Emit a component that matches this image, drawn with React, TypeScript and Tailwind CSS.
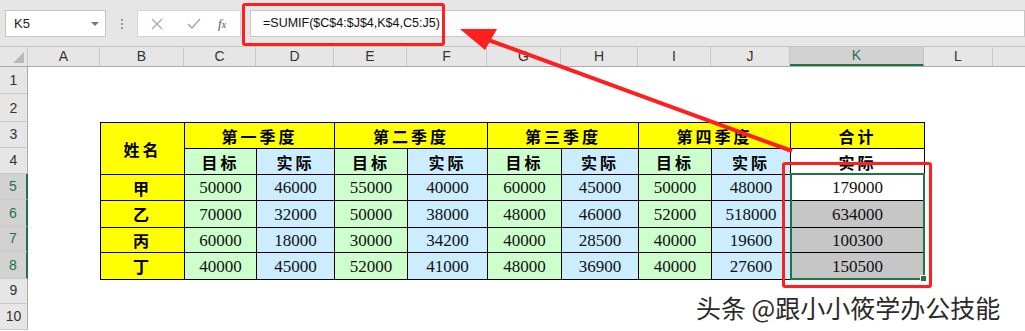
import React from "react";

const cols = [
  { name: "A", w: 72 },
  { name: "B", w: 84 },
  { name: "C", w: 72 },
  { name: "D", w: 78 },
  { name: "E", w: 73 },
  { name: "F", w: 80 },
  { name: "G", w: 74 },
  { name: "H", w: 77 },
  { name: "I", w: 73 },
  { name: "J", w: 79 },
  { name: "K", w: 134 },
  { name: "L", w: 69 },
  { name: "", w: 60 },
];

const rowHeights = [27, 28, 26, 26, 26, 27, 25, 27, 25, 26];

const data = [
  { name: "甲", nums: [50000, 46000, 55000, 40000, 60000, 45000, 50000, 48000], total: 179000 },
  { name: "乙", nums: [70000, 32000, 50000, 38000, 48000, 46000, 52000, 518000], total: 634000 },
  { name: "丙", nums: [60000, 18000, 30000, 34200, 40000, 28500, 40000, 19600], total: 100300 },
  { name: "丁", nums: [40000, 45000, 52000, 41000, 48000, 36900, 40000, 27600], total: 150500 },
];

const cjk = "font-['Noto_Sans_CJK_SC',sans-serif] font-bold text-[16px] tracking-[3px]";
const num = "font-['Liberation_Serif',serif] text-[17px] text-[#111]";
const cell = "border border-black text-center p-0 leading-none";

const App = () => {
  return (
    <div className="relative w-[1025px] h-[331px] overflow-hidden bg-white font-['Liberation_Sans',sans-serif]">
      {/* formula bar */}
      <div className="h-[47px] bg-[#e6e6e6] flex items-start pt-[10px] border-b border-[#c6c6c6]">
        <div className="ml-[5px] w-[101px] h-[27px] bg-white border border-[#c6c6c6] flex items-center justify-between pl-[8px] pr-[6px]">
          <span className="text-[13px] text-[#222]">K5</span>
          <span className="w-0 h-0 border-l-[4px] border-r-[4px] border-t-[4px] border-l-transparent border-r-transparent border-t-[#777]" />
        </div>
        <div className="w-[31px] h-[27px] flex flex-col items-center justify-center gap-[2px]">
          <span className="w-[2px] h-[2px] bg-[#999]" />
          <span className="w-[2px] h-[2px] bg-[#999]" />
          <span className="w-[2px] h-[2px] bg-[#999]" />
        </div>
        <div className="w-[104px] h-[27px] bg-white border border-[#d4d4d4] flex items-center">
          <svg className="ml-[13px]" width="12" height="12" viewBox="0 0 12 12">
            <path d="M1 1 L11 11 M11 1 L1 11" stroke="#a8a8a8" strokeWidth="1.3" />
          </svg>
          <svg className="ml-[24px]" width="14" height="12" viewBox="0 0 14 12">
            <path d="M1 6 L5 10 L13 1" stroke="#a8a8a8" strokeWidth="1.5" fill="none" />
          </svg>
          <span className="ml-[17px] font-['Liberation_Serif',serif] italic text-[13px] text-[#555]">
            f<span className="text-[10px]">x</span>
          </span>
        </div>
        <div className="ml-[9px] flex-1 h-[27px] bg-[#fdfdfd] border border-[#c6c6c6] flex items-center pl-[12px]">
          <span className="text-[12.5px] text-[#111]">=SUMIF($C$4:$J$4,K$4,C5:J5)</span>
        </div>
      </div>

      {/* column headers */}
      <div className="flex h-[20px] bg-[#e6e6e6] border-b border-[#ababab]">
        <div className="w-[28px] shrink-0 border-r border-[#c8c8c8] relative">
          <svg className="absolute right-[3px] bottom-[3px]" width="11" height="11" viewBox="0 0 11 11">
            <path d="M11 0 L11 11 L0 11 Z" fill="#b8b8b8" />
          </svg>
        </div>
        {cols.map((c, i) => (
          <div
            key={i}
            className={`shrink-0 flex items-center justify-center text-[14px] text-[#333] border-r border-[#c8c8c8] ${
              c.name === "K" ? "bg-[#d2d2d2] border-b-2 border-b-[#217346] text-[#217346]" : ""
            }`}
            style={{ width: c.w }}
          >
            {c.name}
          </div>
        ))}
      </div>

      {/* sheet body */}
      <div className="flex">
        <div className="w-[28px] shrink-0 flex flex-col">
          {rowHeights.map((h, i) => {
            const sel = i >= 4 && i <= 7;
            return (
              <div
                key={i}
                className={`flex items-end justify-center pb-[2px] text-[14px] border-b border-[#c8c8c8] ${
                  sel
                    ? "bg-[#d2d2d2] border-r-2 border-r-[#217346] text-[#217346]"
                    : "bg-[#e6e6e6] border-r border-r-[#ababab] text-[#333]"
                }`}
                style={{ height: h }}
              >
                {i + 1}
              </div>
            );
          })}
        </div>

        <div className="flex-1 pt-[55px] pl-[72px]">
          <table className="table-fixed border-collapse">
            <colgroup>
              {cols.slice(1, 11).map((c) => (
                <col key={c.name} style={{ width: c.w }} />
              ))}
            </colgroup>
            <tbody>
              <tr className="h-[26px]">
                <td rowSpan={2} className={`${cell} bg-[#ffff00] ${cjk}`}>姓名</td>
                {["第一季度", "第二季度", "第三季度", "第四季度"].map((q) => (
                  <td key={q} colSpan={2} className={`${cell} bg-[#ffff00] ${cjk}`}>
                    {q}
                  </td>
                ))}
                <td className={`${cell} bg-[#ffff00] ${cjk}`}>合计</td>
              </tr>
              <tr className="h-[26px]">
                {[0, 1, 2, 3].map((q) => (
                  <React.Fragment key={q}>
                    <td className={`${cell} bg-[#ccffcc] ${cjk}`}>目标</td>
                    <td className={`${cell} bg-[#ccecff] ${cjk}`}>实际</td>
                  </React.Fragment>
                ))}
                <td className={`${cell} bg-white ${cjk}`}>实际</td>
              </tr>
              {data.map((r, ri) => (
                <tr key={r.name} className={ri === 1 ? "h-[27px]" : ri === 2 ? "h-[25px]" : ri === 3 ? "h-[27px]" : "h-[26px]"}>
                  <td className={`${cell} bg-[#ffff00] ${cjk}`}>{r.name}</td>
                  {r.nums.map((n, ni) => (
                    <td key={ni} className={`${cell} ${num} ${ni % 2 === 0 ? "bg-[#ccffcc]" : "bg-[#ccecff]"}`}>
                      {n}
                    </td>
                  ))}
                  <td className={`${cell} ${num} ${ri === 0 ? "bg-white" : "bg-[#c6c6c6]"}`}>{r.total}</td>
                </tr>
              ))}
            </tbody>
          </table>
        </div>
      </div>

      {/* selection K5:K8 */}
      <div className="absolute left-[790px] top-[173px] w-[135px] h-[107px] border-2 border-[#217346] pointer-events-none" />
      <div className="absolute left-[920px] top-[275px] w-[7px] h-[7px] bg-[#217346] border border-white" />

      {/* red annotations */}
      <div className="absolute left-[242px] top-[3px] w-[203px] h-[43px] border-[3px] border-[#ff1f1f] rounded-[3px]" />
      <div className="absolute left-[782px] top-[162px] w-[150px] h-[126px] border-[3px] border-[#ff1f1f] rounded-[3px]" />
      <svg className="absolute left-0 top-0 pointer-events-none" width="1025" height="331" viewBox="0 0 1025 331">
        <line x1="792" y1="151" x2="480" y2="37" stroke="#ff1f1f" strokeWidth="4" />
        <polygon points="460,29 497,29 485,50" fill="#ff1f1f" />
      </svg>

      {/* watermark */}
      <div className="absolute left-[696px] top-[290px] text-[25px] leading-[34px] text-[#2a2a2a] font-['Noto_Sans_CJK_SC',sans-serif] [text-shadow:1px_1px_0_#fff,-1px_-1px_0_#fff,1px_-1px_0_#fff,-1px_1px_0_#fff]">
        头条 @跟小小筱学办公技能
      </div>
    </div>
  );
};

export default App;
